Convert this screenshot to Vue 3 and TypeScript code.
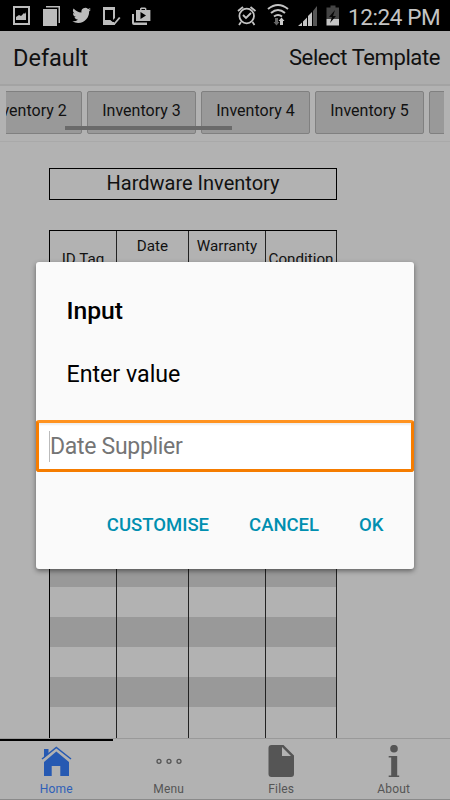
<script setup lang="ts">
const templates: string[] = ['Inventory 2', 'Inventory 3', 'Inventory 4', 'Inventory 5', '']
const columns: string[] = ['ID Tag', 'Date', 'Warranty', 'Condition']
const tabs: string[] = ['Home', 'Menu', 'Files', 'About']
const rows: number[] = Array.from({ length: 15 }, (_, i) => i)
</script>

<template>
  <div class="screen">
    <div class="status">
      <svg class="notifications" width="160" height="31" viewBox="0 0 160 31">
        <g fill="#bcbcbc">
          <path fill-rule="evenodd" d="M13 6h17v19H13zM15 8v15h13V8z" />
          <path d="M16 20v-3l3-2 2 1 3-3 1 1 1-2v8z" />
          <path d="M43 9h14v17H43z" />
          <path d="M46 6h14v17h-1.500V7.500H46z" />
          <path transform="translate(72.300 6) scale(.78)" d="M23.950 4.570a10 10 0 0 1-2.820.770 4.960 4.960 0 0 0 2.160-2.720c-.950.550-2 .950-3.120 1.180a4.920 4.920 0 0 0-8.380 4.480C7.690 8.100 4.070 6.130 1.640 3.160a4.900 4.900 0 0 0 1.520 6.570 4.900 4.900 0 0 1-2.230-.610v.060a4.920 4.920 0 0 0 3.950 4.830 5 5 0 0 1-2.210.080 4.940 4.940 0 0 0 4.600 3.420A9.870 9.870 0 0 1 0 19.540a14 14 0 0 0 7.550 2.210c9.050 0 14-7.500 14-13.980 0-.210 0-.420-.020-.630a9.940 9.940 0 0 0 2.460-2.550z" />
          <path d="M103 7h12v11l-2 2V10h-8v10h5l2 2h2l1 3h-12z" />
          <path d="m107 21 3-1 4 3 5-6 1.500 1-6 7z" />
          <path d="M132 14h2v8.500h13V25h-13q-2 0-2-2z" />
          <path fill-rule="evenodd" d="M136 10h4V8.500l1.200-1h4l1.200 1V10h4v11h-14.400zM141.500 10h3.500V9h-3.500zM140.500 12v7l5.500-3.500z" />
        </g>
      </svg>
      <svg class="indicators" width="110" height="31" viewBox="235 0 110 31">
        <g fill="none" stroke="#c4c4c4" stroke-width="1.800">
          <circle cx="246.700" cy="16" r="7.300" />
          <path d="m243 15 3 3 5-5M238 11l5-4M250.500 7l5 4M241 22l-2 3M252.500 22l2 3" />
          <path d="M268 9q10-8 20 0M271 13q7-6 14 0M274 16.500q4-3 8 0" stroke-width="2" />
        </g>
        <path d="M275 18h3v4h1.500l-3 3.500-3-3.500h1.500z" fill="#666" />
        <path d="m281.500 17.500 3 3.500H283v4h-3v-4h-1.500z" fill="#ccc" />
        <path d="m298 26 4-3.500V26zM303 21.500l4-4V26h-4zM308 16l4-4v14h-4z" fill="#c5c5c5" />
        <path d="m313 11 4-5v20h-4z" fill="#555" />
        <path d="M326.500 7.500h4v-2h5v2h3.500V19h-12.500z" fill="#444" />
        <path d="M326.500 19H339v6.500h-12.500z" fill="#c5c5c5" />
        <path d="m335 10-6 7h3l-2 6 6-7h-3z" fill="#080808" />
      </svg>
      <span class="clock">12:24 PM</span>
    </div>

    <header class="header">
      <span class="name">Default</span>
      <span class="select">Select Template</span>
    </header>

    <div class="strip">
      <div class="scroller">
        <button v-for="t in templates" :key="t" class="chip">{{ t }}</button>
        <div class="scrollbar"></div>
      </div>
    </div>

    <main class="sheet">
      <div class="title">Hardware Inventory</div>
      <div class="table">
        <div class="row head">
          <div v-for="(c, i) in columns" :key="c" class="cell" :class="{ low: i === 0 || i === 3 }">{{ c }}</div>
        </div>
        <div v-for="r in rows" :key="r" class="row" :class="{ dark: r % 2 === 1 }">
          <div v-for="c in columns" :key="c" class="cell"></div>
        </div>
      </div>
    </main>

    <nav class="tabs">
      <div v-for="(t, i) in tabs" :key="t" class="tab" :class="{ active: i === 0 }">
        <svg v-if="i === 0" width="32" height="34" viewBox="0 0 32 34">
          <path d="M4 17 16.300 6.500 29 17v14H20.300V21h-8.600v10H4z" fill="#2659b2" />
          <path d="M4 13V4h4.500v5" fill="#2659b2" />
          <path d="M2 14 16.300 2.500 31 14" fill="none" stroke="#2659b2" stroke-width="1.500" />
        </svg>
        <svg v-else-if="i === 1" width="32" height="34" viewBox="0 0 32 34">
          <g fill="none" stroke="#555" stroke-width="1.300">
            <circle cx="6" cy="16.300" r="2" /><circle cx="16" cy="16.300" r="2" /><circle cx="26" cy="16.300" r="2" />
          </g>
        </svg>
        <svg v-else-if="i === 2" width="32" height="34" viewBox="0 0 32 34">
          <path fill-rule="evenodd" d="M6 0h12.500L29 10.500V29q0 3-3 3H6.500q-3 0-3-3V3q0-3 3-3zM17 2v9h9z" fill="#555" />
        </svg>
        <svg v-else width="32" height="34" viewBox="0 0 32 34">
          <circle cx="16" cy="3.700" r="3.800" fill="#555" />
          <path d="M10.700 11h8.500v19.500h2V32H10.700v-1.500h2.500v-18h-2.500z" fill="#555" />
        </svg>
        <span class="label">{{ t }}</span>
      </div>
    </nav>

    <div class="dialog">
      <h2 class="heading">Input</h2>
      <p class="message">Enter value</p>
      <div class="field"><span class="caret"></span><span class="placeholder">Date Supplier</span></div>
      <div class="actions">
        <button class="action">CUSTOMISE</button>
        <button class="action">CANCEL</button>
        <button class="action">OK</button>
      </div>
    </div>
  </div>
</template>

<style>
body { margin: 0; background: #b2b2b2; }
</style>

<style scoped>
* { box-sizing: border-box; }
.screen {
  position: relative;
  width: 450px;
  height: 800px;
  overflow: hidden;
  display: flex;
  flex-direction: column;
  background: #b2b2b2;
  color: #111;
  font-family: Roboto, "Liberation Sans", sans-serif;
}
button { font-family: inherit; }
.status {
  flex: none;
  height: 31px;
  display: flex;
  background: #000;
  color: #c4c4c4;
}
.notifications { flex: none; margin-right: 75px; }
.indicators { flex: none; }
.clock {
  margin-left: 3px;
  font-size: 22.500px;
  letter-spacing: -.400px;
  line-height: 35px;
  white-space: nowrap;
}
.header {
  flex: none;
  height: 55px;
  padding: 0 10px 0 13px;
  display: flex;
  justify-content: space-between;
  background: #adadad;
  border-bottom: 2px solid #a3a3a3;
  line-height: 54px;
}
.name { font-size: 23.500px; }
.select { font-size: 22px; line-height: 54px; letter-spacing: -.400px; }
.strip {
  flex: none;
  height: 56px;
  padding: 5px 6px 0;
  border-bottom: 1px solid #a9a9a9;
}
.scroller {
  position: relative;
  height: 43px;
  overflow: hidden;
  display: flex;
  gap: 5px;
}
.chip {
  flex: none;
  width: 109px;
  height: 43px;
  padding: 0 0 4px;
  border: 1px solid #808080;
  border-radius: 2px;
  background: #999;
  color: #111;
  font-size: 16px;
}
.chip:first-child { margin-left: -33px; }
.scrollbar {
  position: absolute;
  left: 59px;
  top: 35px;
  width: 167px;
  height: 4px;
  background: #6a6a6a;
}
.sheet {
  flex: none;
  height: 596px;
  overflow: hidden;
  padding: 26px 0 0 49px;
}
.title {
  width: 288px;
  height: 32px;
  margin-bottom: 30px;
  border: 1px solid #000;
  text-align: center;
  font-size: 20px;
  line-height: 29px;
}
.table {
  width: 288px;
  border: 1px solid #000;
  border-right: 0;
  border-bottom: 0;
}
.row {
  display: grid;
  grid-template-columns: 67px 72px 77px 71px;
  height: 30px;
}
.row.dark { background: #999; }
.row.head { height: 56px; }
.row:last-child { height: 31px; }
.cell { border-right: 1px solid #222; }
.head .cell { text-align: center; font-size: 15.200px; line-height: 30px; }
.head .cell.low { line-height: 56px; }
.tabs {
  flex: none;
  height: 62px;
  display: grid;
  grid-template-columns: repeat(4, 1fr);
  border-top: 1px solid #999;
  border-bottom: 1px solid #8a8a8a;
  background: #b2b2b2;
}
.tab {
  display: flex;
  flex-direction: column;
  align-items: center;
  padding-top: 6px;
  color: #555;
}
.tab svg { flex: none; }
.tab.active { color: #2f60b8; border-top: 2px solid #000; padding-top: 4px; }
.label { font-size: 12px; line-height: 20px; letter-spacing: .2px; }
.dialog {
  position: absolute;
  left: 36px;
  top: 262px;
  width: 378px;
  height: 307px;
  border-radius: 3px;
  background: #fafafa;
  box-shadow: 0 2px 5px rgba(0, 0, 0, .45);
  color: #000;
}
.heading {
  margin: 0;
  padding: 34px 0 0 30.500px;
  font-size: 24.700px;
  line-height: 30px;
  font-weight: 500;
}
.message {
  margin: 33px 0 30px;
  padding-left: 30.500px;
  font-size: 23.200px;
  line-height: 31px;
}
.field {
  display: flex;
  align-items: center;
  height: 52px;
  padding-left: 10px;
  border: 3px solid #f57c00;
  border-top-color: #ff9320;
  border-radius: 3px;
  background: #fff;
  box-shadow: inset 0 2px 2px #eee;
}
.caret { width: 1px; height: 31px; background: #bbb; }
.placeholder { padding-top: 2px; color: #757575; font-size: 23px; line-height: 30px; letter-spacing: -.3px; }
.actions {
  display: flex;
  justify-content: flex-end;
  gap: 40px;
  padding: 38px 30.500px 0 0;
}
.action {
  padding: 0;
  border: 0;
  background: none;
  color: #008fb0;
  font-size: 18.500px;
  line-height: 30px;
  font-weight: 500;
}
</style>
